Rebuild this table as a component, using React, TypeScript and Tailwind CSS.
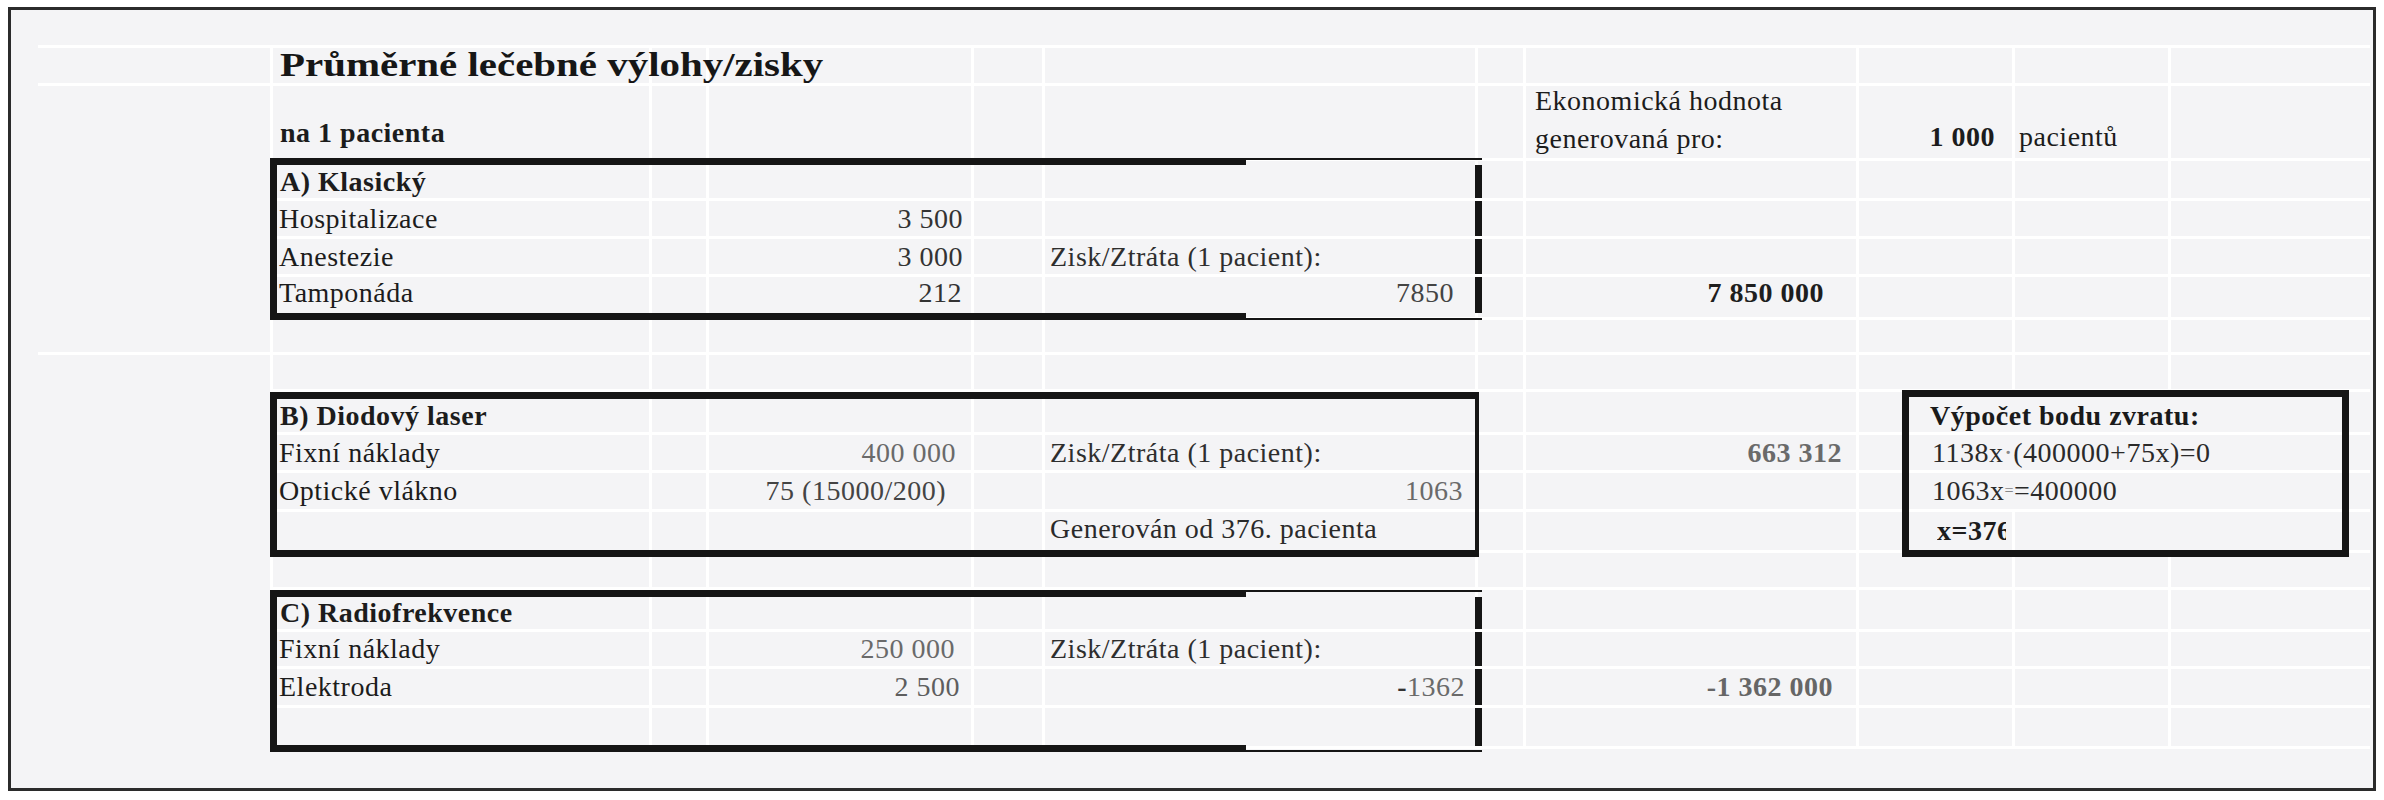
import type { ReactNode } from "react";

const COLS = "grid-cols-[232px_376px_54px_262px_68px_430px_45px_330px_153px_153px_199px]";
const ROWS = "grid-rows-[35px_72px_37px_35px_35px_40px_32px_34px_40px_35px_36px_38px_34px_39px_34px_36px_38px_0px]";

function Cell({ className = "", children }: { className?: string; children?: ReactNode }) {
  return <div className={`flex items-center whitespace-nowrap bg-[#f4f4f6] ${className}`}>{children}</div>;
}

function Empty({ n }: { n: number }) {
  return (
    <>
      {Array.from({ length: n }, (_, i) => (
        <Cell key={i} />
      ))}
    </>
  );
}

// thick border left/top/bottom, top+bottom thin out towards the right end
function OpenBlock({ className }: { className: string }) {
  return (
    <div className={`flex flex-col justify-between border-l-[7px] border-[#151515] ${className}`}>
      <div className="flex h-[7px] items-start">
        <div className="h-[7px] w-[969px] bg-[#151515]" />
        <div className="h-[2px] flex-1 bg-[#151515]" />
      </div>
      <div className="flex h-[7px] items-end">
        <div className="h-[7px] w-[969px] bg-[#151515]" />
        <div className="h-[2px] flex-1 bg-[#151515]" />
      </div>
    </div>
  );
}

export default function App() {
  return (
    <div className="min-h-screen bg-white pl-[8px] pt-[7px] font-[family-name:Liberation_Serif,Times_New_Roman,serif] text-[28px] tracking-[0.5px] text-[#1c1c1c]">
      <div className="w-[2368px] border-[3px] border-[#2b2b2b] bg-[#f4f4f6] pb-[39px] pl-[27px] pr-[3px] pt-[35px]">
        <div className="grid">
          {/* cells */}
          <div className={`col-start-1 row-start-1 grid ${COLS} ${ROWS} gap-[3px] bg-white pt-[3px]`}>
            {/* title row */}
            <Cell />
            <Cell className="relative z-10 pl-[7px]">
              <span className="origin-left scale-x-[1.24] text-[33px] font-bold leading-[35px] tracking-normal text-[#161616]">
                Průměrné lečebné výlohy/zisky
              </span>
            </Cell>
            <Empty n={9} />

            {/* header row */}
            <Cell className="row-span-6" />
            <Cell className="items-end pb-[4px] pl-[7px] font-bold">na 1 pacienta</Cell>
            <Empty n={5} />
            <Cell className="items-end pl-[9px]">
              <div className="leading-[38px]">
                Ekonomická hodnota
                <br />
                generovaná pro:
              </div>
            </Cell>
            <Cell className="items-end justify-end pr-[17px] font-bold">1 000</Cell>
            <Cell className="items-end pl-[4px]">pacientů</Cell>
            <Cell />

            {/* A) Klasický */}
            <Cell className="pl-[7px] pt-[5px] font-bold">A) Klasický</Cell>
            <Empty n={9} />

            <Cell className="pl-[6px]">Hospitalizace</Cell>
            <Cell />
            <Cell className="justify-end pr-[8px] text-[#333]">3 500</Cell>
            <Empty n={7} />

            <Cell className="pl-[6px]">Anestezie</Cell>
            <Cell />
            <Cell className="justify-end pr-[8px] text-[#333]">3 000</Cell>
            <Cell />
            <Cell className="pl-[5px] text-[#2e2e2e]">Zisk/Ztráta (1 pacient):</Cell>
            <Empty n={5} />

            <Cell className="pb-[8px] pl-[6px]">Tamponáda</Cell>
            <Cell />
            <Cell className="justify-end pb-[8px] pr-[9px] text-[#333]">212</Cell>
            <Cell />
            <Cell className="justify-end pb-[8px] pr-[21px] text-[#444]">7850</Cell>
            <Cell />
            <Cell className="justify-end pb-[8px] pr-[32px] font-bold text-[#1e1e1e]">7 850 000</Cell>
            <Empty n={3} />

            <Empty n={10} />

            <Cell className="row-span-11" />
            <Empty n={10} />

            {/* B) Diodový laser */}
            <Cell className="pl-[7px] pt-[7px] font-bold">B) Diodový laser</Cell>
            <Empty n={6} />
            <Cell className="col-span-3 pl-[71px] pt-[7px] font-bold text-[#1a1a1a]">Výpočet bodu zvratu:</Cell>

            <Cell className="pl-[6px]">Fixní náklady</Cell>
            <Cell />
            <Cell className="justify-end pr-[15px] text-[#6a6a6a]">400 000</Cell>
            <Cell />
            <Cell className="pl-[5px] text-[#2e2e2e]">Zisk/Ztráta (1 pacient):</Cell>
            <Cell />
            <Cell className="justify-end pr-[14px] font-bold text-[#6a6a6a]">663 312</Cell>
            <Cell className="col-span-3 pl-[73px] text-[#2a2a2a]">
              1138x<span className="text-[#888]">·</span>(400000+75x)=0
            </Cell>

            <Cell className="pl-[6px]">Optické vlákno</Cell>
            <Cell />
            <Cell className="justify-end pr-[25px] text-[#444]">75 (15000/200)</Cell>
            <Cell />
            <Cell className="justify-end pr-[12px] text-[#6a6a6a]">1063</Cell>
            <Cell />
            <Cell />
            <Cell className="col-span-3 pl-[73px] text-[#2a2a2a]">
              1063x<span className="text-[16px] text-[#888]">=</span>=400000
            </Cell>

            <Empty n={4} />
            <Cell className="pb-[4px] pl-[5px] text-[#2a2a2a]">Generován od 376. pacienta</Cell>
            <Cell />
            <Cell />
            <Cell className="pl-[78px] font-bold">
              <span className="w-[69px] overflow-hidden">x=376</span>
            </Cell>
            <Cell className="col-span-2" />

            <Empty n={10} />

            {/* C) Radiofrekvence */}
            <Cell className="pl-[7px] pt-[7px] font-bold">C) Radiofrekvence</Cell>
            <Empty n={9} />

            <Cell className="pl-[6px]">Fixní náklady</Cell>
            <Cell />
            <Cell className="justify-end pr-[16px] text-[#6a6a6a]">250 000</Cell>
            <Cell />
            <Cell className="pl-[5px] text-[#2e2e2e]">Zisk/Ztráta (1 pacient):</Cell>
            <Empty n={5} />

            <Cell className="pl-[6px]">Elektroda</Cell>
            <Cell />
            <Cell className="justify-end pr-[11px] text-[#5e5e5e]">2 500</Cell>
            <Cell />
            <Cell className="justify-end pr-[10px] text-[#6a6a6a]">
              <span className="font-bold text-[#333]">-</span>1362
            </Cell>
            <Cell />
            <Cell className="justify-end pr-[23px] font-bold text-[#666]">-1 362 000</Cell>
            <Empty n={3} />

            <Empty n={10} />
          </div>

          {/* borders drawn over the sheet */}
          <div className={`col-start-1 row-start-1 grid ${COLS} ${ROWS} gap-[3px] pt-[3px]`}>
            <OpenBlock className="col-start-2 col-end-7 row-start-3 row-end-7 -mb-[3px] -ml-[3px] -mr-[7px] -mt-[3px]" />
            <div className="col-start-6 row-start-3 -mr-[7px] mt-[4px] w-[7px] justify-self-end bg-[#151515]" />
            <div className="col-start-6 row-start-4 -mr-[7px] w-[7px] justify-self-end bg-[#151515]" />
            <div className="col-start-6 row-start-5 -mr-[7px] w-[7px] justify-self-end bg-[#151515]" />
            <div className="col-start-6 row-start-6 -mr-[7px] mb-[4px] w-[7px] justify-self-end bg-[#151515]" />

            <div className="col-start-2 col-end-7 row-start-9 row-end-13 -mb-[7px] -ml-[3px] -mr-[4px] border-[7px] border-r-[4px] border-[#151515]" />

            <OpenBlock className="col-start-2 col-end-7 row-start-14 row-end-19 -mb-[3px] -ml-[3px] -mr-[7px]" />
            <div className="col-start-6 row-start-14 -mr-[7px] mt-[7px] w-[7px] justify-self-end bg-[#151515]" />
            <div className="col-start-6 row-start-15 -mr-[7px] w-[7px] justify-self-end bg-[#151515]" />
            <div className="col-start-6 row-start-16 -mr-[7px] w-[7px] justify-self-end bg-[#151515]" />
            <div className="col-start-6 row-start-17 -mr-[7px] w-[7px] justify-self-end bg-[#151515]" />

            <div className="col-start-9 col-end-12 row-start-9 row-end-13 -mb-[7px] -mt-[2px] ml-[43px] mr-[21px] border-[7px] border-[#151515]" />
          </div>
        </div>
      </div>
    </div>
  );
}
